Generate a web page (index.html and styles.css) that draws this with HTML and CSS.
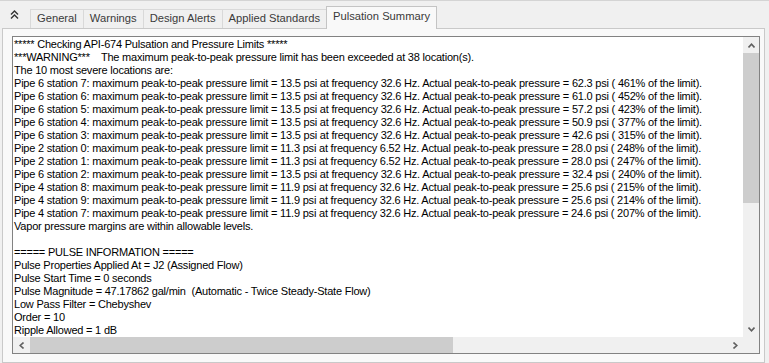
FILE: index.html
```html
<!DOCTYPE html>
<html lang="en">
<head>
  <meta charset="UTF-8">
  <title>Pulsation Summary</title>
  <link rel="stylesheet" href="styles.css">
</head>
<body>
  <div class="window">
    <div class="tabstrip">
      <div class="collapse">
        <svg width="9" height="9" viewBox="0 0 9 9">
          <polyline points="1,4.5 4.5,1 8,4.5" />
          <polyline points="1,8.5 4.5,5 8,8.5" />
        </svg>
      </div>
      <div class="tab">General</div>
      <div class="tab">Warnings</div>
      <div class="tab">Design Alerts</div>
      <div class="tab">Applied Standards</div>
      <div class="tab active">Pulsation Summary</div>
    </div>
    <div class="panel">
      <div class="textbox">
<pre class="report">***** Checking API-674 Pulsation and Pressure Limits *****
***WARNING***    The maximum peak-to-peak pressure limit has been exceeded at 38 location(s).
The 10 most severe locations are:
Pipe 6 station 7: maximum peak-to-peak pressure limit = 13.5 psi at frequency 32.6 Hz. Actual peak-to-peak pressure = 62.3 psi ( 461% of the limit).
Pipe 6 station 6: maximum peak-to-peak pressure limit = 13.5 psi at frequency 32.6 Hz. Actual peak-to-peak pressure = 61.0 psi ( 452% of the limit).
Pipe 6 station 5: maximum peak-to-peak pressure limit = 13.5 psi at frequency 32.6 Hz. Actual peak-to-peak pressure = 57.2 psi ( 423% of the limit).
Pipe 6 station 4: maximum peak-to-peak pressure limit = 13.5 psi at frequency 32.6 Hz. Actual peak-to-peak pressure = 50.9 psi ( 377% of the limit).
Pipe 6 station 3: maximum peak-to-peak pressure limit = 13.5 psi at frequency 32.6 Hz. Actual peak-to-peak pressure = 42.6 psi ( 315% of the limit).
Pipe 2 station 0: maximum peak-to-peak pressure limit = 11.3 psi at frequency 6.52 Hz. Actual peak-to-peak pressure = 28.0 psi ( 248% of the limit).
Pipe 2 station 1: maximum peak-to-peak pressure limit = 11.3 psi at frequency 6.52 Hz. Actual peak-to-peak pressure = 28.0 psi ( 247% of the limit).
Pipe 6 station 2: maximum peak-to-peak pressure limit = 13.5 psi at frequency 32.6 Hz. Actual peak-to-peak pressure = 32.4 psi ( 240% of the limit).
Pipe 4 station 8: maximum peak-to-peak pressure limit = 11.9 psi at frequency 32.6 Hz. Actual peak-to-peak pressure = 25.6 psi ( 215% of the limit).
Pipe 4 station 9: maximum peak-to-peak pressure limit = 11.9 psi at frequency 32.6 Hz. Actual peak-to-peak pressure = 25.6 psi ( 214% of the limit).
Pipe 4 station 7: maximum peak-to-peak pressure limit = 11.9 psi at frequency 32.6 Hz. Actual peak-to-peak pressure = 24.6 psi ( 207% of the limit).
Vapor pressure margins are within allowable levels.

===== PULSE INFORMATION =====
Pulse Properties Applied At = J2 (Assigned Flow)
Pulse Start Time = 0 seconds
Pulse Magnitude = 47.17862 gal/min  (Automatic - Twice Steady-State Flow)
Low Pass Filter = Chebyshev
Order = 10
Ripple Allowed = 1 dB</pre>
        <div class="vscroll">
          <div class="arrow">
            <svg width="7" height="5" viewBox="0 0 7 5"><polyline points="0.5,4.5 3.5,1.2 6.5,4.5" /></svg>
          </div>
          <div class="thumb"></div>
          <div class="track"></div>
          <div class="arrow">
            <svg width="7" height="5" viewBox="0 0 7 5"><polyline points="0.5,0.5 3.5,3.8 6.5,0.5" /></svg>
          </div>
        </div>
        <div class="hscroll">
          <div class="arrow">
            <svg width="5" height="7" viewBox="0 0 5 7"><polyline points="4.5,0.5 1.2,3.5 4.5,6.5" /></svg>
          </div>
          <div class="thumb"></div>
          <div class="track"></div>
          <div class="arrow">
            <svg width="5" height="7" viewBox="0 0 5 7"><polyline points="0.5,0.5 3.8,3.5 0.5,6.5" /></svg>
          </div>
        </div>
        <div class="corner"></div>
      </div>
    </div>
  </div>
</body>
</html>
```

FILE: styles.css
```css
body {
  margin: 0;
  background: #f0f0f0;
  font-family: "Liberation Sans", Arial, sans-serif;
}
.window {
  border-top: 1px solid #d4d4d4;
}
.tabstrip {
  display: flex;
  align-items: flex-end;
  height: 27px;
}
.collapse {
  width: 30px;
  height: 27px;
  display: flex;
  align-items: center;
  padding-left: 10px;
  box-sizing: border-box;
}
.collapse svg polyline {
  fill: none;
  stroke: #333;
  stroke-width: 1.4;
}
.tab {
  height: 18px;
  line-height: 17px;
  padding: 0 6px;
  margin-right: -1px;
  border: 1px solid #d9d9d9;
  border-bottom: none;
  font-size: 11.2px;
  color: #3a3a3a;
  background: #f0f0f0;
}
.tab.active {
  height: 22px;
  line-height: 19px;
  margin-bottom: -1px;
  border-color: #c4c4c4;
  background: #f9f9f9;
  position: relative;
  z-index: 1;
}
.panel {
  margin-left: 2px;
  width: 763px;
  height: 335px;
  box-sizing: border-box;
  padding: 7px 4px 8px 9px;
  border: 1px solid #c9c9c9;
  background: #f9f9f9;
}
.textbox {
  display: grid;
  grid-template-columns: 730px 16px;
  grid-template-rows: 300px 16px;
  border: 1px solid #828282;
  background: white;
}
.report {
  margin: 0;
  padding: 1px 0 0 1px;
  overflow: hidden;
  font-family: "Liberation Sans", Arial, sans-serif;
  font-size: 11px;
  line-height: 13px;
  letter-spacing: -0.21px;
  color: #000;
}
.vscroll {
  display: flex;
  flex-direction: column;
  background: #f0f0f0;
}
.hscroll {
  display: flex;
  background: #f0f0f0;
}
.arrow {
  width: 16px;
  height: 16px;
  display: flex;
  align-items: center;
  justify-content: center;
}
.arrow polyline {
  fill: none;
  stroke: #606060;
  stroke-width: 1.6;
}
.vscroll .thumb {
  height: 150px;
  background: #cdcdcd;
}
.hscroll .thumb {
  width: 423px;
  margin-left: 1px;
  background: #cdcdcd;
}
.track {
  flex: 1;
}
.corner {
  background: #f0f0f0;
}
```
